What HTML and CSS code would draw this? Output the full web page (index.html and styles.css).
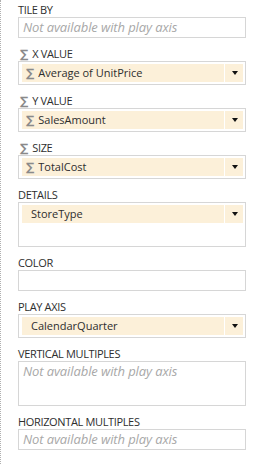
FILE: index.html
```html
<!DOCTYPE html>
<html>
<head>
<meta charset="utf-8">
<link rel="stylesheet" href="styles.css">
</head>
<body>
<div class="pane">
  <div class="field">
    <div class="label">TILE BY</div>
    <div class="box empty"><span class="placeholder">Not available with play axis</span></div>
  </div>
  <div class="field">
    <div class="label"><span class="sigma">∑</span>X VALUE</div>
    <div class="box">
      <div class="item"><div class="item-main"><span class="sigma">∑</span>Average of UnitPrice</div><div class="item-drop"><span class="arrow"></span></div></div>
    </div>
  </div>
  <div class="field">
    <div class="label"><span class="sigma">∑</span>Y VALUE</div>
    <div class="box">
      <div class="item"><div class="item-main"><span class="sigma">∑</span>SalesAmount</div><div class="item-drop"><span class="arrow"></span></div></div>
    </div>
  </div>
  <div class="field">
    <div class="label"><span class="sigma">∑</span>SIZE</div>
    <div class="box">
      <div class="item"><div class="item-main"><span class="sigma">∑</span>TotalCost</div><div class="item-drop"><span class="arrow"></span></div></div>
    </div>
  </div>
  <div class="field">
    <div class="label">DETAILS</div>
    <div class="box tall">
      <div class="item"><div class="item-main plain">StoreType</div><div class="item-drop"><span class="arrow"></span></div></div>
    </div>
  </div>
  <div class="field">
    <div class="label">COLOR</div>
    <div class="box empty"></div>
  </div>
  <div class="field">
    <div class="label">PLAY AXIS</div>
    <div class="box">
      <div class="item"><div class="item-main plain">CalendarQuarter</div><div class="item-drop"><span class="arrow"></span></div></div>
    </div>
  </div>
  <div class="field">
    <div class="label">VERTICAL MULTIPLES</div>
    <div class="box tall empty-tall"><span class="placeholder">Not available with play axis</span></div>
  </div>
  <div class="field">
    <div class="label">HORIZONTAL MULTIPLES</div>
    <div class="box empty"><span class="placeholder">Not available with play axis</span></div>
  </div>
</div>
</body>
</html>
```

FILE: styles.css
```css
html, body {
  margin: 0;
  padding: 0;
  background: #ffffff;
}
body {
  width: 261px;
  height: 464px;
  overflow: hidden;
  font-family: "Open Sans", "Noto Sans", sans-serif;
  color: #333333;
}
.pane {
  height: 464px;
  box-sizing: border-box;
  border-left: 1px dotted #b0b0b0;
  padding: 0 15px 0 17px;
  display: flex;
  flex-direction: column;
  gap: 6px;
}
.field {
  display: flex;
  flex-direction: column;
}
.label {
  height: 17px;
  box-sizing: border-box;
  padding-top: 3px;
  font-size: 11px;
  line-height: 12px;
  letter-spacing: -0.35px;
  color: #2e2e2e;
  display: flex;
  align-items: center;
  align-self: flex-start;
  white-space: nowrap;
}
.label .sigma {
  margin: 0 4px 0 2px;
}
.sigma {
  color: #8a8a8a;
  font-family: "DejaVu Sans", sans-serif;
  font-weight: bold;
  font-size: 11.5px;
  letter-spacing: 0;
}
.box {
  width: 228px;
  box-sizing: border-box;
  border: 1px solid #d6d6d6;
  padding: 2px 2px 2px 3px;
  height: 24px;
}
.box.empty {
  height: 21px;
  padding: 0 4px;
}
.box.tall {
  height: 45px;
}
.box.empty-tall {
  padding: 0 4px;
}
.placeholder {
  display: block;
  font-style: italic;
  font-size: 13px;
  line-height: 19px;
  color: #a8a8a8;
  letter-spacing: -0.1px;
  white-space: nowrap;
}
.item {
  display: flex;
  gap: 1px;
  height: 18px;
}
.item-main {
  flex: 1;
  background: #fcf0d9;
  font-size: 11px;
  line-height: 18px;
  color: #2e2e2e;
  display: flex;
  align-items: center;
  padding-left: 4px;
  white-space: nowrap;
}
.item-main.plain {
  padding-left: 9px;
}
.item-main .sigma {
  margin-right: 4px;
}
.item-drop {
  width: 18px;
  background: #fcf0d9;
  display: flex;
  align-items: center;
  justify-content: center;
}
.arrow {
  width: 0;
  height: 0;
  border-left: 3.5px solid transparent;
  border-right: 3.5px solid transparent;
  border-top: 4px solid #111111;
  margin-left: 1px;
}
```
